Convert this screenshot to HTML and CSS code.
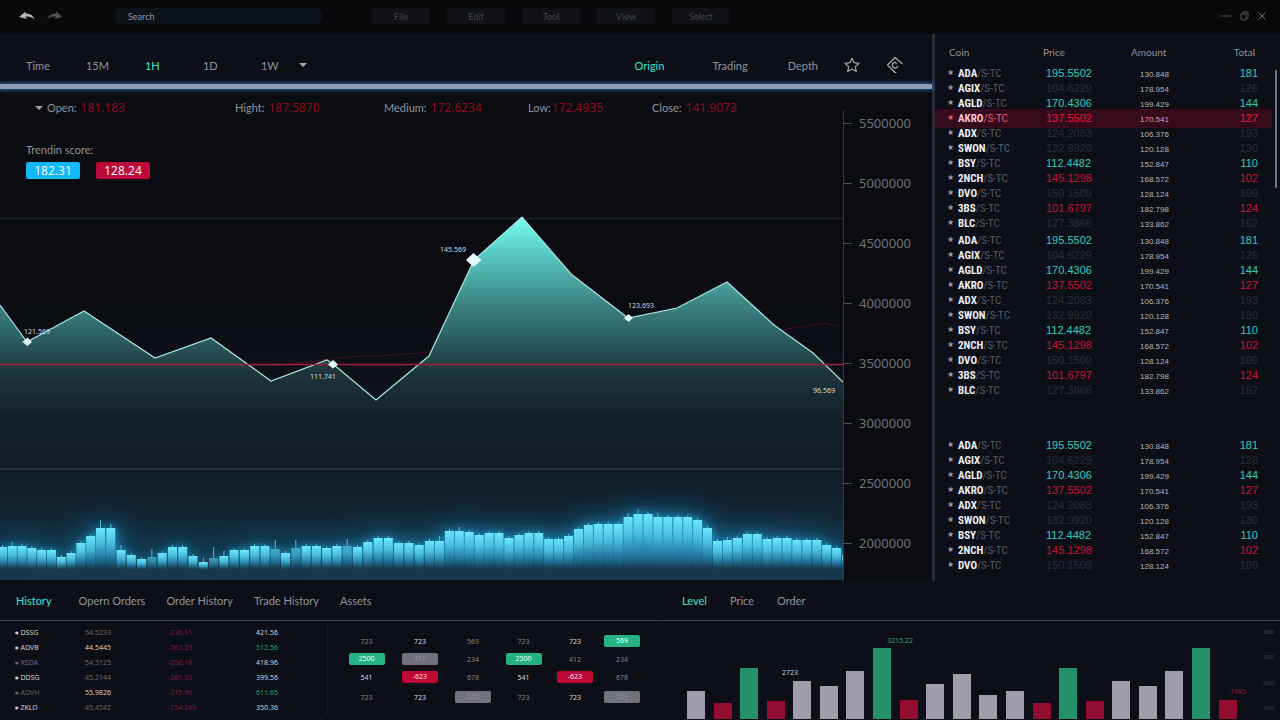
FILE: index.html
```html
<!DOCTYPE html>
<html lang="en">
<head>
<meta charset="utf-8">
<title>Trading dashboard</title>
<link rel="stylesheet" href="styles.css">
</head>
<body>
<header class="topbar">
  <div class="history-buttons">
    <button class="icon-button" aria-label="Undo"><svg width="16" height="10" viewBox="0 0 16 10"><path d="M0 6 6.500 0.500V2.600C11 2.200 14 4.500 15.500 8.500 12.500 5.800 10 5.200 6.500 5.500L8 8Z" fill="#b4b6b9"/></svg></button>
    <button class="icon-button" aria-label="Redo"><svg width="16" height="10" viewBox="0 0 16 10"><path d="M15.500 6 9 0.500V2.600C4.500 2.200 1.500 4.500 0 8.500 3 5.800 5.500 5.200 9 5.500L7.500 8Z" fill="#4d5053"/></svg></button>
  </div>
  <input class="search" type="text" placeholder="Search" aria-label="Search">
  <nav class="menu">
    <button class="menu-item">File</button>
    <button class="menu-item">Edit</button>
    <button class="menu-item">Tool</button>
    <button class="menu-item">View</button>
    <button class="menu-item">Select</button>
  </nav>
  <div class="window-buttons">
    <button class="icon-button" aria-label="Minimize"><svg width="11" height="10" viewBox="0 0 11 10"><path d="M0 5H11" stroke="#4a4c50"/></svg></button>
    <button class="icon-button" aria-label="Restore"><svg width="9" height="10" viewBox="0 0 9 10"><path d="M1 3H6V9H1ZM3 3V1H8V7H6" fill="none" stroke="#55575b"/></svg></button>
    <button class="icon-button" aria-label="Close"><svg width="8" height="10" viewBox="0 0 8 10"><path d="M0.500 1.500 7.500 8.500M7.500 1.500 0.500 8.500" stroke="#74767a"/></svg></button>
  </div>
</header>

<main class="workspace">
  <section class="market">
    <div class="toolbar">
      <nav class="ranges">
        <button class="tab">Time</button>
        <button class="tab">15M</button>
        <button class="tab tab-on">1H</button>
        <button class="tab">1D</button>
        <button class="tab">1W</button>
        <button class="icon-button" aria-label="More ranges"><svg width="8" height="4" viewBox="0 0 8 4"><path d="M0 0H8L4 4Z" fill="#a5a9b1"/></svg></button>
      </nav>
      <nav class="views">
        <button class="tab tab-on">Origin</button>
        <button class="tab">Trading</button>
        <button class="tab">Depth</button>
        <button class="icon-button" aria-label="Favourite"><svg width="16" height="16" viewBox="0 0 16 16"><path d="M8 1.200 10 5.700 15 6.300 11.300 9.600 12.300 14.400 8 12 3.700 14.400 4.700 9.600 1 6.300 6 5.700Z" fill="none" stroke="#a4a7ae" stroke-width="1.200" stroke-linejoin="round"/></svg></button>
        <button class="icon-button" aria-label="Coin"><svg width="18" height="18" viewBox="0 0 18 18"><path d="M10.500 16.500 9 16.500 1.500 9 9 1.500 16.500 8M9.500 6.400A2.800 2.800 0 1 0 11.800 10M9.500 6.400 10.500 8.200" fill="none" stroke="#a4a7ae" stroke-width="1.200" stroke-linejoin="round"/></svg></button>
      </nav>
    </div>
    <div class="glow-line"></div>
    <div class="chart">
      <div class="plot">
        <dl class="quotes">
          <div class="quote"><dt><svg class="caret" width="8" height="4" viewBox="0 0 8 4"><path d="M0 0H8L4 4Z" fill="#9da1a9"/></svg>Open:</dt><dd>181.183</dd></div>
          <div class="quote"><dt>Hight:</dt><dd>187.5870</dd></div>
          <div class="quote"><dt>Medium:</dt><dd>172.6234</dd></div>
          <div class="quote"><dt>Low:</dt><dd>172.4935</dd></div>
          <div class="quote"><dt>Close:</dt><dd>141.9073</dd></div>
        </dl>
        <div class="trend">
          <p class="trend-title">Trendin score:</p>
          <div class="trend-scores"><span class="score score-up">182.31</span><span class="score score-down">128.24</span></div>
        </div>
        <svg class="plot-canvas" viewBox="0 190 843 391" role="img" aria-label="Price and volume chart">
          <defs>
            <linearGradient id="area" gradientUnits="userSpaceOnUse" x1="0" y1="217" x2="0" y2="580">
              <stop offset="0" stop-color="#78fff0"/>
              <stop offset="0.100" stop-color="#5ac9c4"/>
              <stop offset="0.240" stop-color="#3b8482"/>
              <stop offset="0.340" stop-color="#2b5c60"/>
              <stop offset="0.430" stop-color="#1e343d"/>
              <stop offset="0.560" stop-color="#131f29"/>
              <stop offset="0.700" stop-color="#101b25"/>
              <stop offset="0.850" stop-color="#142836"/>
              <stop offset="1" stop-color="#123144"/>
            </linearGradient>
            <linearGradient id="haze" gradientUnits="userSpaceOnUse" x1="0" y1="300" x2="0" y2="420">
              <stop offset="0" stop-color="#0c1119" stop-opacity="0"/>
              <stop offset="1" stop-color="#0e1420"/>
            </linearGradient>
            <linearGradient id="bar" x1="0" y1="0" x2="0" y2="1">
              <stop offset="0" stop-color="#6ce6fd"/>
              <stop offset="0.350" stop-color="#4cbfe0"/>
              <stop offset="0.650" stop-color="#2a83aa"/>
              <stop offset="1" stop-color="#1a4d69" stop-opacity="0"/>
            </linearGradient>
            <linearGradient id="floor" x1="0" y1="0" x2="0" y2="1">
              <stop offset="0" stop-color="#17384a" stop-opacity="0"/>
              <stop offset="0.600" stop-color="#17384a" stop-opacity="0.850"/>
              <stop offset="1" stop-color="#17384a"/>
            </linearGradient>
            <filter id="wide-glow" x="-10%" y="-150%" width="120%" height="400%"><feGaussianBlur stdDeviation="15"/></filter>
            <filter id="near-glow" x="-10%" y="-50%" width="120%" height="200%"><feGaussianBlur stdDeviation="4"/></filter>
          </defs>
          <rect y="300" width="843" height="170" fill="url(#haze)"/>
          <path d="M0 218.500H843" stroke="#1d1f28" stroke-width="2"/>
          <path d="M270 366C310 363 330 357 370 356S440 352 500 338 600 325 650 328 720 338 780 330 815 322 838 326" fill="none" stroke="#8d0a2c" stroke-opacity="0.450"/>
          <path d="M0 305 27 342 84 311 155 358 211 338 271 381 327 360 333 364 376 400 429 356 474 260 522 217 571 274 628 318 677 308 727 282 774 325 813 353 843 382V580H0Z" fill="url(#area)"/>
          <path d="M0 305 27 342 84 311 155 358 211 338 271 381 327 360 333 364 376 400 429 356 474 260 522 217 571 274 628 318 677 308 727 282 774 325 813 353 843 382" fill="none" stroke="#a9e8df" stroke-width="1.200"/>
          <path d="M0 469H843" stroke="#2c3944" stroke-width="1.500"/>
          <g id="wide" filter="url(#wide-glow)" fill="#1899d6" opacity="0.800"></g>
          <g id="near" filter="url(#near-glow)" fill="#1fa5dc" opacity="0.700"></g>
          <rect y="550" width="843" height="30" fill="url(#floor)"/>
          <g id="bars"></g>
          <path d="M0 364.500H843" stroke="#a01c40" stroke-width="1.500"/>
          <g fill="#e4f7fb">
            <path d="M22.500 342 27.500 337.500 32 342 27.500 346Z"/>
            <path d="M328 364.500 333 360 338 364.500 333 368.500Z"/>
            <path d="M466 260 473.500 253 481.500 260 473.500 267Z"/>
            <path d="M624 318 628.500 314 633 318 628.500 322Z"/>
          </g>
          <g class="point-labels">
            <text x="24" y="334">121.569</text>
            <text x="310" y="379">111.741</text>
            <text x="440" y="252">145.569</text>
            <text x="628" y="308">123.693</text>
            <text x="813" y="393">96.569</text>
          </g>
        </svg>
      </div>
      <ol class="axis">
        <li>5500000</li><li>5000000</li><li>4500000</li><li>4000000</li><li>3500000</li><li>3000000</li><li>2500000</li><li>2000000</li>
      </ol>
    </div>
  </section>

  <aside class="coins">
    <table class="coin-table" id="coins">
      <thead><tr><th class="c-name">Coin</th><th class="c-price">Price</th><th class="c-amount">Amount</th><th class="c-total">Total</th></tr></thead>
    </table>
    <div class="scroll-thumb"></div>
  </aside>
</main>

<footer class="bottom">
  <section class="panel">
    <nav class="panel-tabs tabs-orders">
      <button class="tab tab-on">History</button>
      <button class="tab">Opern Orders</button>
      <button class="tab">Order History</button>
      <button class="tab">Trade History</button>
      <button class="tab">Assets</button>
    </nav>
    <div class="panel-body">
      <table class="orders">
        <tr><td>DSSG</td><td class="dim">54.5233</td><td class="loss">-236.11</td><td>421.56</td></tr>
        <tr><td>ADVB</td><td>44.5445</td><td class="loss">-561.23</td><td class="gain">512.56</td></tr>
        <tr><td class="dim">RSDA</td><td class="dim">54.5125</td><td class="loss">-256.18</td><td>418.96</td></tr>
        <tr><td>DDSG</td><td class="dim">45.2144</td><td class="loss">-261.33</td><td>399.56</td></tr>
        <tr><td class="dim">ADVH</td><td>55.9826</td><td class="loss">-315.96</td><td class="gain">611.65</td></tr>
        <tr><td>ZKLO</td><td class="dim">45.4542</td><td class="loss">-154.269</td><td>350.36</td></tr>
      </table>
      <table class="assets">
        <tr><td>723</td><td class="lit">723</td><td>569</td><td>723</td><td class="lit">723</td><td><span class="pill pill-green">569</span></td></tr>
        <tr><td><span class="pill pill-green">2500</span></td><td><span class="pill pill-grey">412</span></td><td>234</td><td><span class="pill pill-green">2500</span></td><td>412</td><td>234</td></tr>
        <tr><td class="lit">541</td><td><span class="pill pill-red">-623</span></td><td>678</td><td class="lit">541</td><td><span class="pill pill-red">-623</span></td><td>678</td></tr>
        <tr class="last-row"><td>723</td><td class="lit">723</td><td><span class="pill pill-grey">569</span></td><td>723</td><td class="lit">723</td><td><span class="pill pill-grey">569</span></td></tr>
      </table>
    </div>
  </section>
  <section class="panel">
    <nav class="panel-tabs tabs-level">
      <button class="tab tab-on">Level</button>
      <button class="tab">Price</button>
      <button class="tab">Order</button>
    </nav>
    <svg class="level-canvas" viewBox="662 621 618 98" role="img" aria-label="Level chart">
      <g id="levels"></g>
      <g class="level-labels">
        <text x="887" y="643" fill="#2ea57c">3215.22</text>
        <text x="782" y="675" fill="#c9cad0">2723</text>
        <text x="1228" y="694" fill="#a30f35">-1985</text>
      </g>
      <g class="level-axis">
        <text x="1263" y="634">3000</text><text x="1263" y="659">3000</text><text x="1263" y="685">2000</text><text x="1263" y="710">1000</text>
      </g>
    </svg>
  </section>
</footer>
<script src="app.js"></script>
</body>
</html>
```
FILE: styles.css
```css
* { box-sizing: border-box; }

body {
  margin: 0;
  min-height: 100vh;
  background: #0d0f18;
  color: #8f939c;
  font-family: Lato, "Noto Sans", sans-serif;
  font-size: 11px;
}

button, input { font: inherit; color: inherit; border: 0; padding: 0; background: none; }
svg { display: block; }
.icon-button { display: flex; }

/* Title bar */
.topbar {
  display: flex;
  align-items: center;
  height: 34px;
  padding: 0 14px 2px 19px;
  background: #07090b;
  font-size: 9px;
}
.history-buttons { display: flex; gap: 12px; width: 96px; }
.search {
  width: 207px;
  height: 16px;
  padding: 0 13px;
  border-radius: 5px;
  background: #0c131b;
}
.search::placeholder { color: #8f949c; opacity: 1; }
.menu { display: flex; gap: 17px; margin-left: 50px; }
.menu-item {
  width: 58px;
  height: 16px;
  border-radius: 3px;
  background: #101217;
  color: #43464c;
}
.window-buttons { display: flex; align-items: center; gap: 9px; margin-left: auto; }

/* Main area */
.workspace { display: grid; grid-template-columns: minmax(0, 932fr) minmax(0, 348fr); }
.toolbar {
  display: flex;
  justify-content: space-between;
  align-items: center;
  height: 50px;
  padding: 12px 28px 0 26px;
  background: #0d0f18;
}
.ranges, .views { display: flex; align-items: center; }
.ranges { gap: 36px; }
.ranges .tab { min-width: 22px; text-align: left; }
.ranges .icon-button { margin-left: -20px; }
.views .tab + .tab { margin-left: 40px; }
.views .tab:first-child { margin-right: 8px; }
.views .icon-button { margin-left: 26px; }
.tab { white-space: nowrap; }
.tab-on { color: #3be3cb; }
.glow-line { height: 5px; background: #8c9db6; box-shadow: 0 0 4px 1px #35608f; position: relative; }

.chart { display: grid; grid-template-columns: minmax(0, 843fr) minmax(0, 89fr); background: #0a0c11; }
.quotes { display: flex; height: 37px; margin: 0; padding-left: 35px; align-items: center; }
.quote { display: flex; align-items: center; gap: 4px; width: 149px; white-space: nowrap; }
.quote:first-child { width: 200px; }
.quote:nth-child(3) { width: 144px; }
.quote:nth-child(4) { width: 124px; gap: 1px; }
.quote dt { display: flex; align-items: center; gap: 4px; }
.quote dd { margin: 0; color: #8e0a1f; font: 12px "Noto Sans", sans-serif; }
.trend { height: 64px; padding: 16px 0 0 26px; }
.trend-title { margin: 0; line-height: 16px; }
.trend-scores { display: flex; gap: 16px; padding-top: 4px; }
.score {
  width: 54px;
  height: 17px;
  border-radius: 2px;
  color: #e9f4fa;
  font: 12px/18px "Noto Sans", sans-serif;
  text-align: center;
}
.score-up { background: #12b9fa; }
.score-down { background: #bb0a38; }
.plot-canvas { width: 100%; height: auto; }
.point-labels { fill: #d2d9dd; font: 7px "Noto Sans", sans-serif; }

.axis {
  margin: 0;
  padding: 4px 0 0;
  list-style: none;
  background: linear-gradient(#363840, #363840) 0 21px / 1px 100% no-repeat;
  color: #6e7079;
  font: 13px/60px "Noto Sans", sans-serif;
}
.axis li { display: flex; align-items: center; gap: 7px; height: 60px; }
.axis li::before { content: ""; width: 9px; height: 1px; background: #4a4c54; }

/* Coin list */
.coins { display: flex; align-items: flex-start; gap: 3px; padding-right: 3px; border-left: 3px solid #2a2d38; }
.coin-table { flex: 1; border-spacing: 0; table-layout: fixed; font: 11px "Liberation Sans", sans-serif; }
.coin-table th {
  height: 32px;
  padding: 3px 0 0;
  font: 10px Lato, sans-serif;
  text-align: left;
}
.coin-table td { height: 15px; padding: 0; line-height: 13px; color: #292d3a; }
.coin-table .c-name { width: 108px; padding-left: 14px; }
.coin-table .c-price { width: 88px; }
.coin-table .c-total { padding-right: 17px; text-align: right; }
.coin-table .name-cell { padding: 0 0 0 12px; color: #555a68; font: 11px/13px "Liberation Sans Narrow", "Roboto Condensed", "Liberation Sans", sans-serif; white-space: nowrap; }
.coin-table .price-cell { padding-left: 3px; }
.coin-table .amount-cell { padding: 2px 0 0 9px; color: #b1b4bd; font-size: 8px; }
.coin-table .total-cell { padding-right: 14px; text-align: right; }
.name-cell b { color: #eceef2; }
.name-cell i { display: inline-block; width: 11px; color: #9a9ea9; font: 8px/11px "DejaVu Sans", sans-serif; vertical-align: top; }
.coin-table .up { color: #35c9bb; }
.coin-table .down { color: #ce0f2c; }
.spaced-2::before, .spaced-40::before { content: ""; display: block; height: 2px; }
.spaced-40::before { height: 40px; }
.coin-table .active td { background: #350b1b; box-shadow: 0 2px #350b1b, 0 -2px #350b1b; }
.coin-table .active .name-cell, .active .name-cell i { color: #f0587f; }
.coin-table .active .name-cell b { color: #ffc3d3; }
.coin-table .active .amount-cell { color: #e897ab; }
.coin-table .active .down { color: #f8102f; }
.scroll-thumb { width: 2px; height: 118px; margin-top: 36px; border-radius: 1px; background: #717785; }

/* Bottom panels */
.bottom { display: grid; grid-template-columns: minmax(0, 661fr) minmax(0, 618fr); gap: 1px; }
.panel-tabs { display: flex; align-items: center; height: 40px; border-bottom: 1px solid #43454d; }
.tabs-orders { gap: 21px; padding-left: 16px; }
.tabs-orders .tab-on { margin-right: 6px; }
.tabs-level { gap: 23px; padding-left: 20px; }
.panel-body { display: flex; align-items: flex-start; padding-top: 4px; }
.orders, .assets { border-spacing: 0; table-layout: fixed; font: 7px "Noto Sans", sans-serif; }
.orders { width: 328px; color: #cdd0d6; border-right: 1px solid #191c26; }
.orders td { height: 15px; padding: 0; }
.orders td:first-child { width: 85px; padding-left: 15px; }
.orders td:first-child::before { content: "●"; font: 4px/7px "DejaVu Sans", sans-serif; margin-right: 2px; vertical-align: 1px; }
.orders td:nth-child(2) { width: 83px; }
.orders td:nth-child(3) { width: 88px; }
.orders .dim { color: #646772; }
.orders .loss { color: #92123a; }
.orders .gain { color: #2a9f77; }
.assets { width: 302px; margin: 7px 0 0 12px; color: #80838d; text-align: center; }
.assets td { height: 18px; padding: 0; }
.assets td:first-child { width: 53px; }
.assets td:nth-child(2), .assets td:nth-child(5) { width: 54px; }
.assets td:nth-child(3) { width: 52px; }
.assets td:nth-child(4) { width: 49px; }
.assets .last-row td { height: 22px; }
.assets .lit { color: #d5d7dc; }
.pill { display: block; width: 36px; height: 12px; margin: 0 auto; border-radius: 2px; line-height: 12px; }
.pill-green { background: #27b283; color: #e6fff5; }
.pill-red { background: #bd0737; color: #ffe7ee; }
.pill-grey { background: #72727f; color: #8f8f9b; }
.level-canvas { width: 100%; height: auto; }
.level-labels { font: 7px "Noto Sans", sans-serif; }
.level-axis { fill: #444650; font: 5px "Noto Sans", sans-serif; }
```
FILE: app.js
```js
const SVG = "http://www.w3.org/2000/svg";

function rect(parent, x, y, width, height, fill) {
  const r = document.createElementNS(SVG, "rect");
  r.setAttribute("x", x);
  r.setAttribute("y", y);
  r.setAttribute("width", width);
  r.setAttribute("height", height);
  if (fill) r.setAttribute("fill", fill);
  parent.appendChild(r);
  return r;
}

// Volume bars: top, wick top (0 when short), dim flag
const volume = [
  [547], [546, 542], [546], [548], [550], [550], [557], [553], [543], [536], [528, 520], [528, 524],
  [550, 545], [555], [559], [557, 549, 1], [553], [547], [547], [556], [562, 558], [558, 547, 1], [556, 551],
  [550], [550], [546], [546], [549, 540, 1], [553], [548, 540, 1], [546], [546], [548], [546], [546, 539, 1],
  [547], [542], [538], [538], [543], [543], [545], [541], [541, 536], [531], [531, 527], [532], [535], [533],
  [533], [538], [535], [533], [533], [539], [539], [536], [529], [525], [524], [524], [524], [517, 513],
  [514, 509], [514], [517, 513], [517], [517], [517], [520], [528], [541], [540, 537], [538], [534], [534],
  [539], [538], [538], [540], [540], [540], [545], [548], [555]
];

function barX(i) {
  if (i <= 10) return 9.8 * i - 2;
  if (i <= 42) return 96 + 10.28 * (i - 10);
  return 425 + 9.93 * (i - 42);
}

const bars = document.getElementById("bars");
const near = document.getElementById("near");
const wide = document.getElementById("wide");
volume.forEach(([top, wick, dim], i) => {
  const x = Math.round(barX(i) * 10) / 10;
  rect(wide, x, top, 10, Math.max(560 - top, 6));
  rect(near, x, top, 10, 564 - top);
  const bar = rect(bars, x, top, 9, 570 - top, "url(#bar)");
  if (dim) bar.setAttribute("opacity", "0.5");
  rect(bars, x + 4, wick || top - 2, 1, wick ? top - wick : 2, "#4bbfdd");
});

// Level bars
const grey = "#9f9dac", green = "#24916b", red = "#920c2f";
[[691, grey], [703, red], [668, green], [701, red], [681, grey], [686, grey], [671, grey], [648, green],
 [700, red], [684, grey], [674, grey], [695, grey], [691, grey], [703, red], [668, green], [701, red],
 [681, grey], [686, grey], [671, grey], [648, green], [700, red]].forEach(([top, colour], i) => {
  rect(document.getElementById("levels"), Math.round(687 + i * 26.58), top, 18, 719 - top, colour);
});

// Coin rows
const coins = [
  ["ADA", "195.5502", "130.848", "181", "up"],
  ["AGIX", "104.6229", "178.954", "126", ""],
  ["AGLD", "170.4306", "199.429", "144", "up"],
  ["AKRO", "137.5502", "170.541", "127", "down"],
  ["ADX", "124.2083", "106.376", "193", ""],
  ["SWON", "132.9920", "120.128", "130", ""],
  ["BSY", "112.4482", "152.847", "110", "up"],
  ["2NCH", "145.1298", "168.572", "102", "down"],
  ["DVO", "150.1509", "128.124", "109", ""],
  ["3BS", "101.6797", "182.798", "124", "down"],
  ["BLC", "127.3866", "133.862", "162", ""]
];
[[11, ""], [11, "spaced-2"], [9, "spaced-40"]].forEach(([count, spacing], group) => {
  const body = document.createElement("tbody");
  body.className = spacing;
  body.innerHTML = coins.slice(0, count).map(([name, price, amount, total, trend], i) =>
    `<tr class="${group === 0 && i === 3 ? "active" : ""}">` +
    `<td class="name-cell"><i>★</i><b>${name}</b>/S-TC</td>` +
    `<td class="price-cell ${trend}">${price}</td>` +
    `<td class="amount-cell">${amount}</td>` +
    `<td class="total-cell ${trend}">${total}</td></tr>`).join("");
  document.getElementById("coins").appendChild(body);
});
```
